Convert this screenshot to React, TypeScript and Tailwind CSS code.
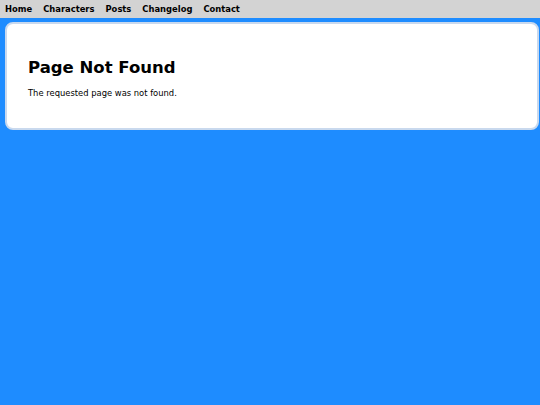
export default function App() {
  return (
    <div className="min-h-[405px] bg-[#1e8cff] font-['DejaVu_Sans',sans-serif]">
      <nav className="h-[18px] bg-[#d3d3d3] flex items-center gap-[11px] pl-[5px] pt-[1px] text-[8.4px] font-bold text-black">
        <span>Home</span>
        <span>Characters</span>
        <span>Posts</span>
        <span>Changelog</span>
        <span>Contact</span>
      </nav>
      <div className="ml-[5px] mt-[4px] w-[534px] h-[108px] bg-white border-2 border-[#c9d9ee] rounded-[8px] pl-[21px] pt-[34px]">
        <h1 className="text-[16.5px] leading-[19px] font-bold text-black">Page Not Found</h1>
        <p className="mt-[11px] text-[8.4px] leading-[10px] text-black">The requested page was not found.</p>
      </div>
    </div>
  );
}
